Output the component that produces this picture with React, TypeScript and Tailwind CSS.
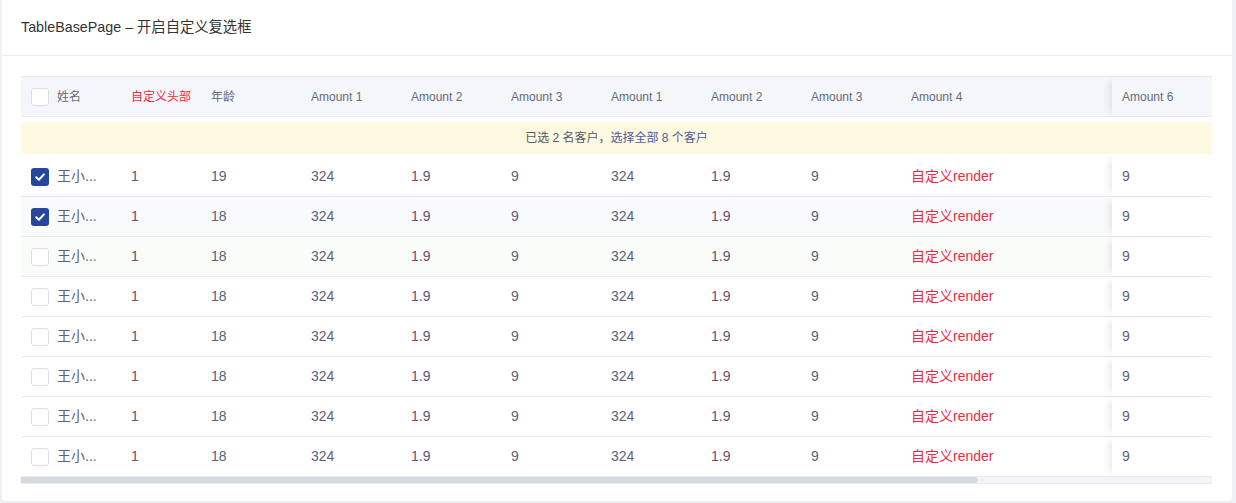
import React from "react";

const font = { fontFamily: '"Liberation Sans", "Noto Sans CJK SC", sans-serif' };

function Check({ checked }: { checked: boolean }) {
  if (checked) {
    return (
      <span className="w-[18px] h-[18px] rounded-[3px] bg-[#26459d] flex items-center justify-center shrink-0">
        <svg width="12" height="12" viewBox="0 0 12 12">
          <path d="M2.2 6.2 L4.9 8.8 L9.9 3.4" fill="none" stroke="#fff" strokeWidth="2" strokeLinecap="round" strokeLinejoin="round" />
        </svg>
      </span>
    );
  }
  return <span className="w-[18px] h-[18px] rounded-[3px] border border-[#dcdfe6] bg-white shrink-0" />;
}

const headCols = [
  { t: "自定义头部", w: "w-[80px]", red: true },
  { t: "年龄", w: "w-[100px]" },
  { t: "Amount 1", w: "w-[100px]" },
  { t: "Amount 2", w: "w-[100px]" },
  { t: "Amount 3", w: "w-[100px]" },
  { t: "Amount 1", w: "w-[100px]" },
  { t: "Amount 2", w: "w-[100px]" },
  { t: "Amount 3", w: "w-[100px]" },
  { t: "Amount 4", w: "w-[211px]" },
];

const rows = [
  { checked: true, age: "19", bg: "bg-white" },
  { checked: true, age: "18", bg: "bg-[#f9fafc]" },
  { checked: false, age: "18", bg: "bg-[#fafcfa]" },
  { checked: false, age: "18", bg: "bg-white" },
  { checked: false, age: "18", bg: "bg-white" },
  { checked: false, age: "18", bg: "bg-white" },
  { checked: false, age: "18", bg: "bg-white" },
  { checked: false, age: "18", bg: "bg-white" },
];

export default function App() {
  return (
    <div className="w-[1236px] h-[503px] bg-[#eef0f6] pl-[2px] pr-[4px] pb-[2px]" style={font}>
      <div className="bg-white h-[501px] rounded-b-[4px] flex flex-col">
        <div className="h-[56px] border-b border-[#e8eaf0] flex items-center pl-[19px] text-[14.3px] text-[#333]">
          TableBasePage – 开启自定义复选框
        </div>
        <div className="pt-[20px] pl-[19px] pr-[20px]">
          {/* header */}
          <div className="flex h-[41px] bg-[#f5f6fa] border-t border-b border-[#e8eaf0] text-[12px] text-[#666b7a]">
            <div className="w-[1091px] flex overflow-hidden">
              <div className="w-[100px] shrink-0 flex items-center pl-[10px] gap-[8px]">
                <Check checked={false} />
                <span>姓名</span>
              </div>
              {headCols.map((c, i) => (
                <div key={i} className={`${c.w} shrink-0 flex items-center pl-[10px] ${c.red ? "text-[#f5283c]" : ""}`}>
                  {c.t}
                </div>
              ))}
            </div>
            <div className="w-[100px] flex items-center pl-[10px] bg-[#f5f6fa] shadow-[-6px_0_8px_-4px_rgba(0,0,0,0.10)] relative z-10">
              Amount 6
            </div>
          </div>
          {/* banner */}
          <div className="h-[40px] pt-[5px] pb-[3px]">
            <div className="h-full bg-[#fff9e1] rounded-[4px] flex items-center justify-center text-[12px] text-[#555a66]">
              <span>已选 2 名客户，</span>
              <span className="text-[#4a5a9e]">选择全部 8 个客户</span>
            </div>
          </div>
          {/* rows */}
          {rows.map((r, i) => (
            <div key={i} className={`flex h-[40px] border-b border-[#e8eaf0] text-[14px] text-[#5b6275] ${r.bg}`}>
              <div className="w-[1091px] flex overflow-hidden">
                <div className="w-[100px] shrink-0 flex items-center pl-[10px] gap-[8px]">
                  <Check checked={r.checked} />
                  <span>王小...</span>
                </div>
                <div className="w-[80px] shrink-0 flex items-center pl-[10px] text-[#6a4f6e]">1</div>
                <div className="w-[100px] shrink-0 flex items-center pl-[10px]">{r.age}</div>
                <div className="w-[100px] shrink-0 flex items-center pl-[10px]">324</div>
                <div className="w-[100px] shrink-0 flex items-center pl-[10px] text-[#6a4f6e]">1.9</div>
                <div className="w-[100px] shrink-0 flex items-center pl-[10px]">9</div>
                <div className="w-[100px] shrink-0 flex items-center pl-[10px]">324</div>
                <div className="w-[100px] shrink-0 flex items-center pl-[10px] text-[#6a4f6e]">1.9</div>
                <div className="w-[100px] shrink-0 flex items-center pl-[10px]">9</div>
                <div className="w-[211px] shrink-0 flex items-center pl-[10px] text-[#f5283c]">自定义render</div>
              </div>
              <div className="w-[100px] flex items-center pl-[10px] bg-white shadow-[-6px_0_8px_-4px_rgba(0,0,0,0.10)] relative z-10">
                9
              </div>
            </div>
          ))}
          {/* scrollbar */}
          <div className="h-[7px] bg-[#f3f4f7] border-b border-[#e8eaf0] flex">
            <div className="w-[957px] h-[6px] bg-[#d6d9df] rounded-r-[3px]" />
          </div>
        </div>
      </div>
    </div>
  );
}
